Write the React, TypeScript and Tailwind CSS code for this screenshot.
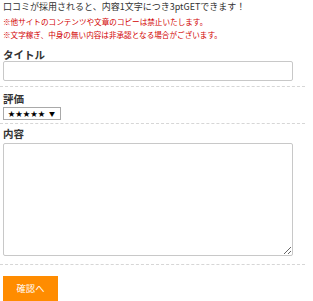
import React from "react";

const Divider = () => <div className="border-b border-dashed border-[#d6d6d6] w-[305px]" />;

export default function App() {
  return (
    <div className="w-[313px] h-[301px] bg-white text-[#333] font-['Noto_Sans_CJK_JP','Noto_Sans',sans-serif] overflow-hidden">
      <div className="pl-[3px] whitespace-nowrap">
        <p className="text-[9px] leading-[14px]">口コミが採用されると、内容1文字につき3ptGETできます！</p>
        <p className="text-[7.6px] leading-[13px] text-[#d20000] mt-[1px]">※他サイトのコンテンツや文章のコピーは禁止いたします。</p>
        <p className="text-[7.6px] leading-[13px] text-[#d20000]">※文字稼ぎ、中身の無い内容は非承認となる場合がございます。</p>
      </div>

      <div className="pl-[3px] mt-[8px]">
        <h3 className="text-[10.5px] leading-[12px] font-bold">タイトル</h3>
        <input type="text" className="block w-[290px] h-[20px] border border-[#c8c8c8] rounded-[2px] bg-white" />
      </div>
      <div className="mt-[5px]">
        <Divider />
      </div>

      <div className="pl-[3px] mt-[6px]">
        <h3 className="text-[10.5px] leading-[12px] font-bold">評価</h3>
        <div className="mt-[2px] w-[58px] h-[13px] border border-[#a9a9a9] flex items-center justify-between pl-[4px] pr-[5px] text-[7px] leading-none text-black">
          <span className="tracking-[0.5px]">★★★★★</span>
          <span className="text-[6px]">▼</span>
        </div>
      </div>
      <div className="mt-[3px]">
        <Divider />
      </div>

      <div className="pl-[3px] mt-[4px]">
        <h3 className="text-[10.5px] leading-[12px] font-bold">内容</h3>
        <textarea className="block w-[290px] h-[113px] mt-[3px] border border-[#c8c8c8] rounded-[2px] bg-white resize-y" />
      </div>
      <div className="mt-[8px]">
        <Divider />
      </div>

      <div className="pl-[3px] mt-[8px]">
        <button className="w-[55px] h-[25px] bg-[#ff8c00] text-white text-[9.3px] leading-none">確認へ</button>
      </div>
    </div>
  );
}
